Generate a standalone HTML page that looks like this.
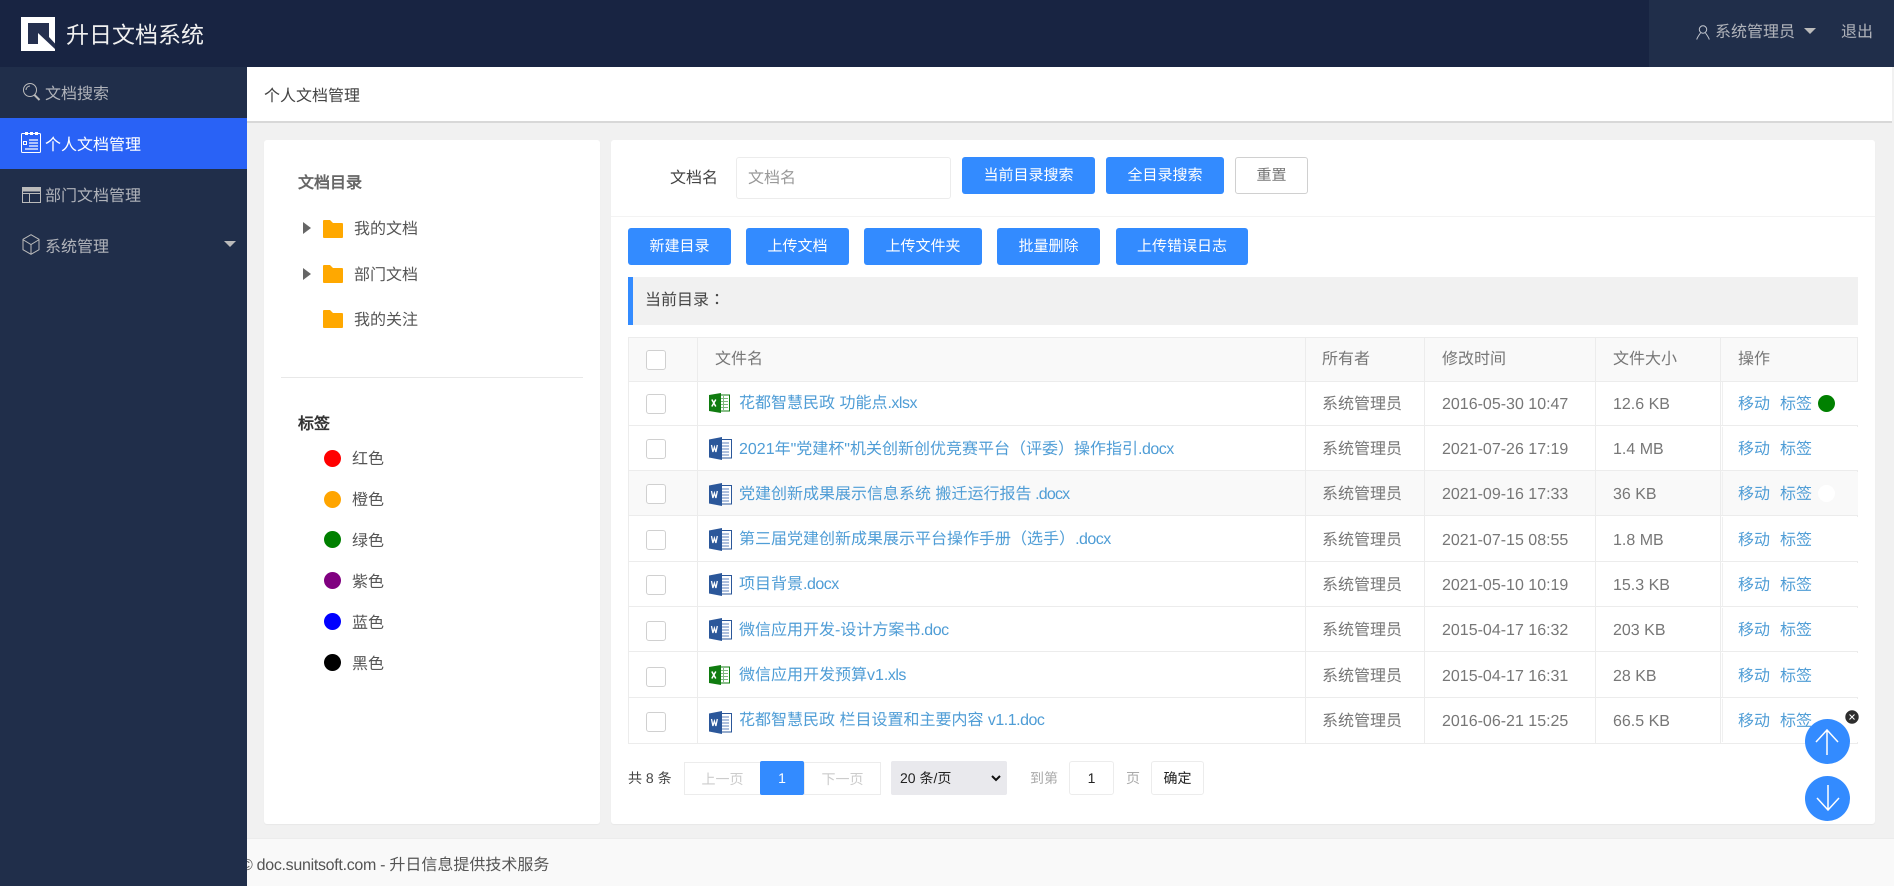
<!DOCTYPE html>
<html lang="zh-CN"><head><meta charset="utf-8"><title>升日文档系统</title>
<style>
*{box-sizing:border-box;margin:0;padding:0}
html,body{width:1894px;height:886px;overflow:hidden;background:#f1f1f1}
body{position:relative;font:16px "Liberation Sans","WenQuanYi Zen Hei",sans-serif;color:#333;text-rendering:geometricPrecision}
i.p{font-style:normal;font-family:"Noto Sans CJK TC",sans-serif;line-height:0}
i.e{font-style:normal;letter-spacing:-.5px}
.a{position:absolute;white-space:nowrap}
.top{left:0;top:0;width:1894px;height:67px;background:#182442}
.topr{left:1649px;top:0;width:245px;height:67px;background:#202e4a}
.side{left:0;top:67px;width:247px;height:819px;background:#202e4a;z-index:5}
.m{left:0;width:247px;height:51px;line-height:55px;padding-left:45px;color:#b0b3ba;z-index:6}
.m.on{background:#2962f6;color:#fff}
.panel{background:#fff;border-radius:3px;box-shadow:0 1px 1px rgba(0,0,0,.04)}
.btn{background:#338bff;color:#fff;font-size:15px;text-align:center;border-radius:3px;height:37px;line-height:38px}
.t{color:#555;line-height:22px;height:22px}
.dot{width:17px;height:17px;border-radius:50%}
.cb{width:20px;height:20px;border:1px solid #d0d0d0;border-radius:3px;background:#fff}
.r{left:628px;width:1230px;height:46px;border-bottom:1px solid #ececec;border-left:1px solid #ececec;border-right:1px solid #ececec;background:#fff;color:#777}
.r.g{background:#f9f9f9}
.r span{position:absolute;top:0;line-height:48px;white-space:nowrap}
.r .n{left:110px;color:#4f9dd6;line-height:46px}
.r .o{left:693px}.r .d{left:813px}.r .s{left:984px}
.r .cell{position:absolute;left:1093px;top:1px;width:136px;height:43px;background:#fff;border-left:1px solid #f0f0f0}
.r.g .cell{background:#f9f9f9}
.r .mv{left:1109px;color:#4f9dd6}.r .bq{left:1151px;color:#4f9dd6}
.r svg{position:absolute;left:80px}
.r .cb{position:absolute;left:17px}
.col{width:1px;top:337px;height:406px;background:#ececec;z-index:2}
.h{top:337px;color:#777;line-height:46px;z-index:3}
.pg{font-size:14px;line-height:34px;height:34px}
.bx{border:1px solid #ececec;background:#fff;text-align:center;line-height:32px;font-size:14px}
</style></head><body>
<div class="a top"></div><div class="a topr"></div>
<svg class="a" style="left:21px;top:17px" width="34" height="34" viewBox="21 17 34 34"><rect x="21" y="17" width="34" height="34" fill="#fff"/><polygon points="28,23 49,23 49,37 55,43.500 55,49 38,33 38,44 28,44" fill="#25304f"/></svg>
<div class="a" style="left:66px;top:20px;font-size:23px;line-height:30px;color:#f0f0f0">升日文档系统</div>
<svg class="a" style="left:1696px;top:25px" width="14" height="15" viewBox="0 0 14 15" fill="none" stroke="#c4c8d0"><circle cx="7" cy="4.500" r="3.700"/><path d="M4.500 8C3 10 1.500 12 .7 14.500M9.500 8c1.500 2 3 4 3.800 6.500"/></svg>
<div class="a" style="left:1715px;top:22px;line-height:22px;color:#b0b3ba">系统管理员</div>
<div class="a" style="left:1804px;top:28px;border:6px solid transparent;border-top:6px solid #bbb;border-bottom:0"></div>
<div class="a" style="left:1841px;top:22px;line-height:22px;color:#b0b3ba">退出</div>

<div class="a side"></div>
<div class="a m" style="top:67px">文档搜索</div>
<div class="a m on" style="top:118px">个人文档管理</div>
<div class="a m" style="top:169px">部门文档管理</div>
<div class="a m" style="top:220px">系统管理</div>
<svg class="a" style="left:22px;top:82px;z-index:7" width="19" height="19" viewBox="0 0 19 19" fill="none" stroke="#bbb"><circle cx="8" cy="8" r="6.500"/><path d="M4 8a4 4 0 0 1 4-4"/><path d="M12.500 13l5 5" stroke-width="2"/></svg>
<svg class="a" style="left:21px;top:132px;z-index:7" width="20" height="21" viewBox="0 0 20 21" fill="none" stroke="#fff"><rect x=".5" y="1.500" width="19" height="19" rx="1"/><path d="M4 1.500h3M9 1.500h3M14 1.500h3" stroke-width="3"/><path d="M8 8h9M8 11h9M8 14h9M4 17h13" stroke-width="1.200"/><rect x="2.500" y="9.500" width="3" height="3"/></svg>
<svg class="a" style="left:22px;top:187px;z-index:7" width="19" height="16" viewBox="0 0 19 16" fill="none" stroke="#bbb"><rect x=".5" y=".5" width="18" height="15"/><path d="M0 2.500h19" stroke-width="4"/><path d="M.5 6.500h18M7.500 6.500v9"/></svg>
<svg class="a" style="left:22px;top:234px;z-index:7" width="18" height="21" viewBox="0 0 18 21" fill="none" stroke="#bbb"><path d="M9 .7l8 4.600v10.400l-8 4.600-8-4.600V5.300zM1.500 6L9 10.500 16.500 6M9 10.500V20"/></svg>
<div class="a" style="left:224px;top:241px;z-index:7;border:6px solid transparent;border-top:6px solid #bbb;border-bottom:0"></div>

<div class="a" style="left:247px;top:67px;width:1645px;height:56px;background:#fff;border-bottom:2px solid #d8d8d8"></div>
<div class="a" style="left:264px;top:86px;line-height:22px;color:#444">个人文档管理</div>

<!-- left panel -->
<div class="a panel" style="left:264px;top:140px;width:336px;height:684px"></div>
<div class="a" style="left:298px;top:173px;line-height:22px;color:#666;font-weight:bold">文档目录</div>
<div class="a" style="left:303px;top:222px;border:6.500px solid transparent;border-left:8px solid #666;border-right:0"></div>
<div class="a" style="left:303px;top:268px;border:6.500px solid transparent;border-left:8px solid #666;border-right:0"></div>
<svg class="a" style="left:323px;top:220px" width="20" height="18" viewBox="0 0 20 18"><path d="M1 0h6l3 3h9a1 1 0 0 1 1 1v13a1 1 0 0 1-1 1H1a1 1 0 0 1-1-1V1a1 1 0 0 1 1-1z" fill="#ffa800"/></svg>
<svg class="a" style="left:323px;top:265px" width="20" height="18" viewBox="0 0 20 18"><path d="M1 0h6l3 3h9a1 1 0 0 1 1 1v13a1 1 0 0 1-1 1H1a1 1 0 0 1-1-1V1a1 1 0 0 1 1-1z" fill="#ffa800"/></svg>
<svg class="a" style="left:323px;top:310px" width="20" height="18" viewBox="0 0 20 18"><path d="M1 0h6l3 3h9a1 1 0 0 1 1 1v13a1 1 0 0 1-1 1H1a1 1 0 0 1-1-1V1a1 1 0 0 1 1-1z" fill="#ffa800"/></svg>
<div class="a t" style="left:354px;top:219px">我的文档</div>
<div class="a t" style="left:354px;top:265px">部门文档</div>
<div class="a t" style="left:354px;top:310px">我的关注</div>
<div class="a" style="left:281px;top:377px;width:302px;height:1px;background:#e8e8e8"></div>
<div class="a" style="left:298px;top:414px;line-height:22px;color:#333;font-weight:bold">标签</div>
<div class="a dot" style="left:324px;top:450px;background:#f00"></div><div class="a t" style="left:352px;top:449px">红色</div>
<div class="a dot" style="left:324px;top:491px;background:#ffa500"></div><div class="a t" style="left:352px;top:490px">橙色</div>
<div class="a dot" style="left:324px;top:531px;background:#008000"></div><div class="a t" style="left:352px;top:531px">绿色</div>
<div class="a dot" style="left:324px;top:572px;background:#800080"></div><div class="a t" style="left:352px;top:572px">紫色</div>
<div class="a dot" style="left:324px;top:613px;background:#00f"></div><div class="a t" style="left:352px;top:613px">蓝色</div>
<div class="a dot" style="left:324px;top:654px;background:#000"></div><div class="a t" style="left:352px;top:654px">黑色</div>

<!-- right panel -->
<div class="a panel" style="left:611px;top:140px;width:1264px;height:684px"></div>
<div class="a" style="left:611px;top:216px;width:1264px;height:1px;background:#f3f3f3"></div>
<div class="a" style="left:670px;top:168px;line-height:22px;color:#444">文档名</div>
<div class="a" style="left:736px;top:157px;width:215px;height:42px;border:1px solid #ececec;border-radius:3px;background:#fff;padding-left:11px;line-height:42px;color:#999">文档名</div>
<div class="a btn" style="left:962px;top:157px;width:133px">当前目录搜索</div>
<div class="a btn" style="left:1106px;top:157px;width:118px">全目录搜索</div>
<div class="a btn" style="left:1235px;top:157px;width:73px;background:#fff;color:#777;border:1px solid #d0d0d0;line-height:36px">重置</div>
<div class="a btn" style="left:628px;top:228px;width:103px">新建目录</div>
<div class="a btn" style="left:746px;top:228px;width:103px">上传文档</div>
<div class="a btn" style="left:864px;top:228px;width:118px">上传文件夹</div>
<div class="a btn" style="left:997px;top:228px;width:103px">批量删除</div>
<div class="a btn" style="left:1116px;top:228px;width:132px">上传错误日志</div>
<div class="a" style="left:628px;top:277px;width:1230px;height:48px;background:#f1f1f1;border-left:5px solid #338bff;padding-left:12px;line-height:48px;color:#444">当前目录<i class="p" lang="zh-TW">：</i></div>

<!-- table -->
<div class="a r g" style="top:337px;height:45px;border-top:1px solid #ececec"><div class="cb" style="top:12px"></div></div>
<div class="a h" style="left:715px">文件名</div><div class="a h" style="left:1322px">所有者</div><div class="a h" style="left:1442px">修改时间</div><div class="a h" style="left:1613px">文件大小</div><div class="a h" style="left:1738px">操作</div>

<svg width="0" height="0" style="position:absolute"><defs>
<symbol id="w" viewBox="0 0 23 23"><rect x="9" y="2.500" width="13.500" height="18.500" fill="#fff" stroke="#2b579a"/><path d="M12 6h8M12 9h8M12 12h8M12 15h8M12 18h8" stroke="#7f9ccb" stroke-width="1.200"/><path d="M0 2.500L13 0v23L0 20.500z" fill="#2b579a"/><path d="M2.500 8l1.400 7 1.500-5 1.500 5 1.400-7" fill="none" stroke="#fff" stroke-width="1.300"/></symbol>
<symbol id="x" viewBox="0 0 21 20"><rect x="9" y="2" width="11.500" height="16" fill="#fff" stroke="#107c10"/><path d="M11 5.500h8M11 8.500h8M11 11.500h8M11 14.500h8M14.500 3v14" stroke="#7fb77f" stroke-width="1"/><path d="M0 2L12 0v20L0 18z" fill="#107c10"/><path d="M2.800 6.500l4 7M6.800 6.500l-4 7" fill="none" stroke="#fff" stroke-width="1.500"/></symbol>
</defs></svg>

<div class="a r" style="top:381px;height:45px"><div class="cb" style="top:13px"></div><svg width="21" height="20" style="top:12px"><use href="#x"/></svg><span class="n">花都智慧民政 功能点<i class="e">.xlsx</i></span><span class="o">系统管理员</span><span class="d">2016-05-30 10:47</span><span class="s">12.6 KB</span><div class="cell"></div><span class="mv">移动</span><span class="bq">标签</span><div class="dot" style="position:absolute;left:1189px;top:14px;background:#008000"></div></div>
<div class="a r" style="top:426px;height:45px"><div class="cb" style="top:13px"></div><svg width="23" height="23" style="top:11px"><use href="#w"/></svg><span class="n" style="line-height:47px">2021年"党建杯"机关创新创优竞赛平台<i class="p" lang="zh-TW">（</i>评委<i class="p" lang="zh-TW">）</i>操作指引<i class="e">.docx</i></span><span class="o">系统管理员</span><span class="d">2021-07-26 17:19</span><span class="s">1.4 MB</span><div class="cell"></div><span class="mv">移动</span><span class="bq">标签</span></div>
<div class="a r g" style="top:471px;height:45px"><div class="cb" style="top:13px"></div><svg width="23" height="23" style="top:12px"><use href="#w"/></svg><span class="n" style="line-height:47px">党建创新成果展示信息系统 搬迁运行报告<i class="e" style="letter-spacing:-.8px"> .docx</i></span><span class="o">系统管理员</span><span class="d">2021-09-16 17:33</span><span class="s">36 KB</span><div class="cell"></div><span class="mv">移动</span><span class="bq">标签</span><div class="dot" style="position:absolute;left:1189px;top:14px;background:#fff"></div></div>
<div class="a r" style="top:516px;height:46px"><div class="cb" style="top:14px"></div><svg width="23" height="23" style="top:12px"><use href="#w"/></svg><span class="n" style="line-height:47px">第三届党建创新成果展示平台操作手册<i class="p" lang="zh-TW">（</i>选手<i class="p" lang="zh-TW">）</i><i class="e">.docx</i></span><span class="o" style="top:1px">系统管理员</span><span class="d" style="top:1px">2021-07-15 08:55</span><span class="s" style="top:1px">1.8 MB</span><div class="cell" style="height:44px"></div><span class="mv" style="top:1px">移动</span><span class="bq" style="top:1px">标签</span></div>
<div class="a r" style="top:562px;height:45px"><div class="cb" style="top:13px"></div><svg width="23" height="23" style="top:11px"><use href="#w"/></svg><span class="n">项目背景<i class="e">.docx</i></span><span class="o">系统管理员</span><span class="d">2021-05-10 10:19</span><span class="s">15.3 KB</span><div class="cell"></div><span class="mv">移动</span><span class="bq">标签</span></div>
<div class="a r" style="top:607px;height:45px"><div class="cb" style="top:14px"></div><svg width="23" height="23" style="top:11px"><use href="#w"/></svg><span class="n" style="line-height:47px">微信应用开发-设计方案书<i class="e">.doc</i></span><span class="o">系统管理员</span><span class="d">2015-04-17 16:32</span><span class="s">203 KB</span><div class="cell"></div><span class="mv">移动</span><span class="bq">标签</span></div>
<div class="a r" style="top:652px;height:46px"><div class="cb" style="top:15px"></div><svg width="21" height="20" style="top:13px"><use href="#x"/></svg><span class="n" style="line-height:47px">微信应用开发预算v1<i class="e">.xls</i></span><span class="o" style="top:1px">系统管理员</span><span class="d" style="top:1px">2015-04-17 16:31</span><span class="s" style="top:1px">28 KB</span><div class="cell" style="height:44px"></div><span class="mv" style="top:1px">移动</span><span class="bq" style="top:1px">标签</span></div>
<div class="a r" style="top:698px;height:46px"><div class="cb" style="top:14px"></div><svg width="23" height="23" style="top:13px"><use href="#w"/></svg><span class="n">花都智慧民政 栏目设置和主要内容 <i class="e">v1.1.doc</i></span><span class="o">系统管理员</span><span class="d">2016-06-21 15:25</span><span class="s">66.5 KB</span><div class="cell"></div><span class="mv">移动</span><span class="bq">标签</span></div>
<div class="a" style="left:628px;top:381px;width:1230px;height:1px;background:#ececec;z-index:3"></div>
<div class="a col" style="left:697px;z-index:3"></div><div class="a col" style="left:1305px;z-index:3"></div><div class="a col" style="left:1424px;z-index:3"></div><div class="a col" style="left:1595px;z-index:3"></div><div class="a col" style="left:1720px;z-index:3"></div>

<!-- pagination -->
<div class="a pg" style="left:628px;top:761px;color:#444">共 8 条</div>
<div class="a bx" style="left:684px;top:762px;width:77px;height:33px;color:#ccc">上一页</div>
<div class="a bx" style="left:804px;top:762px;width:77px;height:33px;color:#ccc">下一页</div>
<div class="a" style="left:760px;top:761px;width:44px;height:34px;background:#338bff;color:#fff;border-radius:2px;text-align:center;font-size:14px;line-height:34px">1</div>
<div class="a pg" style="left:891px;top:761px;width:116px;background:#e9e9ed;border-radius:2px;padding-left:9px;color:#222">20 条/页</div>
<svg class="a" style="left:991px;top:775px" width="10" height="7" viewBox="0 0 10 7" fill="none" stroke="#111" stroke-width="2"><path d="M1 1l4 4 4-4"/></svg>
<div class="a pg" style="left:1030px;top:761px;color:#aaa">到第</div>
<div class="a bx" style="left:1069px;top:761px;width:45px;height:34px;border-radius:3px;color:#222">1</div>
<div class="a pg" style="left:1126px;top:761px;color:#aaa">页</div>
<div class="a bx" style="left:1151px;top:761px;width:53px;height:34px;border-radius:3px;color:#222">确定</div>

<!-- float -->
<svg class="a" style="left:1805px;top:719px;z-index:8" width="45" height="45" viewBox="0 0 45 45"><circle cx="22.500" cy="22.500" r="22.500" fill="#338bff"/><path d="M22 11v25M11 23L22 11l11 12" fill="none" stroke="#fff" stroke-width="1.500"/></svg>
<svg class="a" style="left:1805px;top:776px;z-index:8" width="45" height="45" viewBox="0 0 45 45"><circle cx="22.500" cy="22.500" r="22.500" fill="#338bff"/><path d="M23 9v25M12 22l11 12 11-12" fill="none" stroke="#fff" stroke-width="1.500"/></svg>
<svg class="a" style="left:1845px;top:710px;z-index:9" width="14" height="14" viewBox="0 0 14 14"><circle cx="7" cy="7" r="6.700" fill="#2d2d2d"/><path d="M4.500 4.500l5 5M9.500 4.500l-5 5" stroke="#fff"/></svg>

<!-- footer -->
<div class="a" style="left:0;top:838px;width:1894px;height:48px;background:#f9f9f9;border-top:1px solid #ececec"></div>
<div class="a" style="left:241px;top:855px;line-height:22px;color:#555"><i class="e" style="letter-spacing:-.3px">© doc.sunitsoft.com - </i>升日信息提供技术服务</div>
<div class="a side" style="height:48px;top:838px"></div>
</body></html>
